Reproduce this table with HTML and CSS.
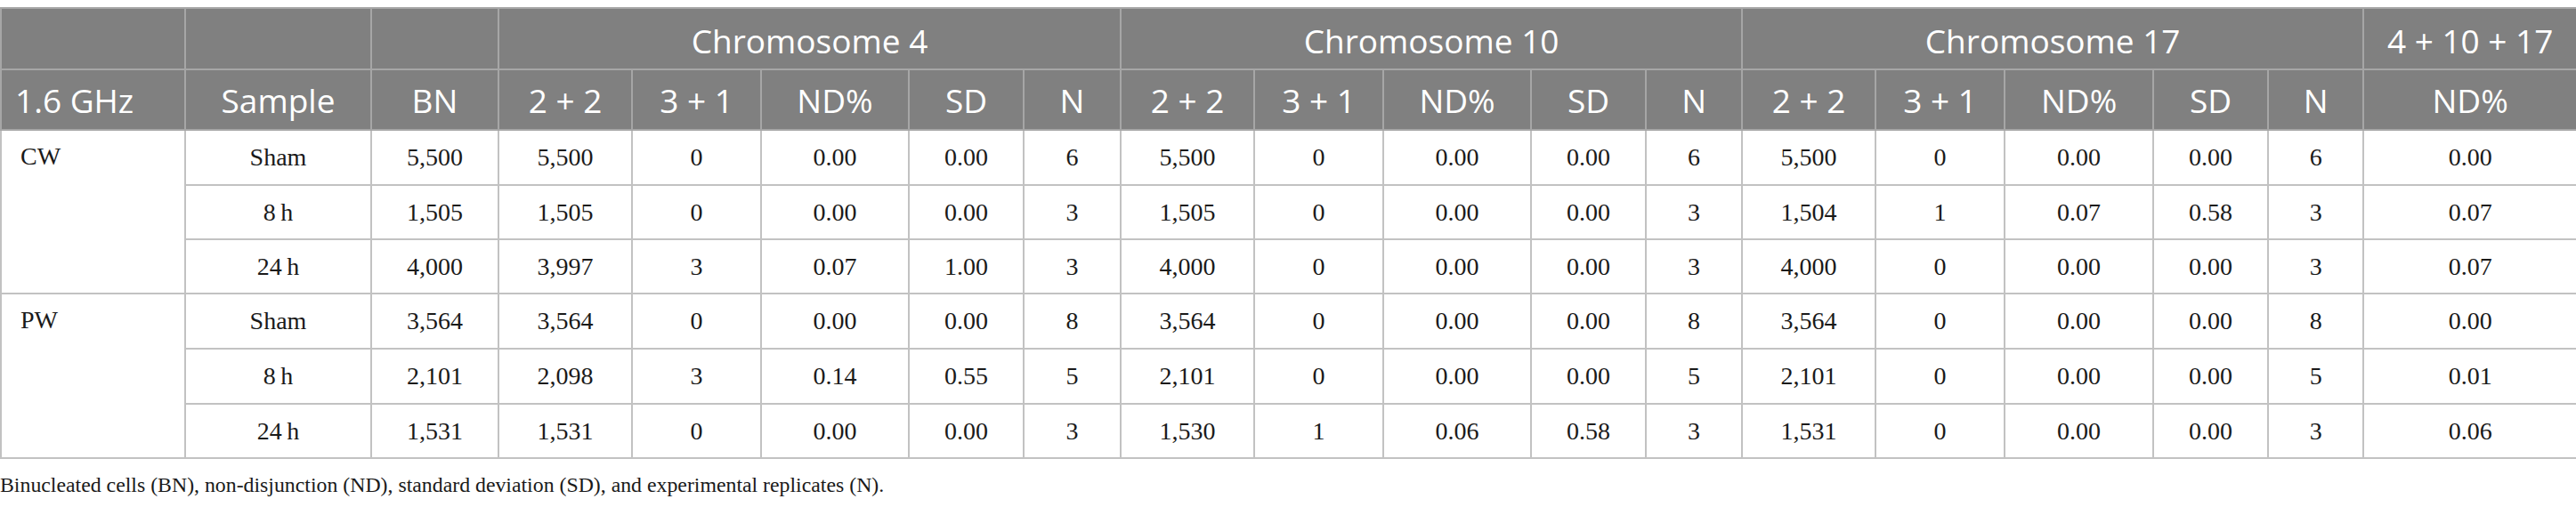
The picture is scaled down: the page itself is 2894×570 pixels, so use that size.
FILE: index.html
```html
<!DOCTYPE html>
<html lang="en">
<head>
<meta charset="utf-8">
<title>Table</title>
<link rel="stylesheet" href="styles.css">
</head>
<body>
<div class="wrap">
<table class="data">
<colgroup>
<col class="w207"><col class="w209"><col class="w143">
<col class="w150"><col class="w145"><col class="w166"><col class="w129"><col class="w109">
<col class="w150"><col class="w145"><col class="w166"><col class="w129"><col class="w108">
<col class="w150"><col class="w145"><col class="w167"><col class="w129"><col class="w107">
<col class="w240">
</colgroup>
<thead>
<tr class="h1">
<th></th><th></th><th></th>
<th colspan="5">Chromosome 4</th>
<th colspan="5">Chromosome 10</th>
<th colspan="5">Chromosome 17</th>
<th>4 + 10 + 17</th>
</tr>
<tr class="h2">
<th class="left">1.6 GHz</th><th>Sample</th><th>BN</th>
<th>2 + 2</th><th>3 + 1</th><th>ND%</th><th>SD</th><th>N</th>
<th>2 + 2</th><th>3 + 1</th><th>ND%</th><th>SD</th><th>N</th>
<th>2 + 2</th><th>3 + 1</th><th>ND%</th><th>SD</th><th>N</th>
<th>ND%</th>
</tr>
</thead>
<tbody>
<tr class="r62">
<td class="grp" rowspan="3">CW</td><td>Sham</td><td>5,500</td>
<td>5,500</td><td>0</td><td>0.00</td><td>0.00</td><td>6</td>
<td>5,500</td><td>0</td><td>0.00</td><td>0.00</td><td>6</td>
<td>5,500</td><td>0</td><td>0.00</td><td>0.00</td><td>6</td>
<td>0.00</td>
</tr>
<tr class="r61">
<td>8&#8201;h</td><td>1,505</td>
<td>1,505</td><td>0</td><td>0.00</td><td>0.00</td><td>3</td>
<td>1,505</td><td>0</td><td>0.00</td><td>0.00</td><td>3</td>
<td>1,504</td><td>1</td><td>0.07</td><td>0.58</td><td>3</td>
<td>0.07</td>
</tr>
<tr class="r61">
<td>24&#8201;h</td><td>4,000</td>
<td>3,997</td><td>3</td><td>0.07</td><td>1.00</td><td>3</td>
<td>4,000</td><td>0</td><td>0.00</td><td>0.00</td><td>3</td>
<td>4,000</td><td>0</td><td>0.00</td><td>0.00</td><td>3</td>
<td>0.07</td>
</tr>
<tr class="r62">
<td class="grp" rowspan="3">PW</td><td>Sham</td><td>3,564</td>
<td>3,564</td><td>0</td><td>0.00</td><td>0.00</td><td>8</td>
<td>3,564</td><td>0</td><td>0.00</td><td>0.00</td><td>8</td>
<td>3,564</td><td>0</td><td>0.00</td><td>0.00</td><td>8</td>
<td>0.00</td>
</tr>
<tr class="r62">
<td>8&#8201;h</td><td>2,101</td>
<td>2,098</td><td>3</td><td>0.14</td><td>0.55</td><td>5</td>
<td>2,101</td><td>0</td><td>0.00</td><td>0.00</td><td>5</td>
<td>2,101</td><td>0</td><td>0.00</td><td>0.00</td><td>5</td>
<td>0.01</td>
</tr>
<tr class="r61">
<td>24&#8201;h</td><td>1,531</td>
<td>1,531</td><td>0</td><td>0.00</td><td>0.00</td><td>3</td>
<td>1,530</td><td>1</td><td>0.06</td><td>0.58</td><td>3</td>
<td>1,531</td><td>0</td><td>0.00</td><td>0.00</td><td>3</td>
<td>0.06</td>
</tr>
</tbody>
</table>
<p class="caption">Binucleated cells (BN), non-disjunction (ND), standard deviation (SD), and experimental replicates (N).</p>
</div>
</body>
</html>
```

FILE: styles.css
```css
html, body {
  margin: 0;
  padding: 0;
  background: #ffffff;
}

.wrap {
  padding-top: 8px;
  width: 2894px;
}

.data {
  width: 2894px;
  table-layout: fixed;
  border-collapse: collapse;
  font-family: "Liberation Serif", "Times New Roman", serif;
  font-size: 28px;
  color: #1a1a1a;
}

.w207 { width: 207px; }
.w209 { width: 209px; }
.w143 { width: 143px; }
.w150 { width: 150px; }
.w145 { width: 145px; }
.w166 { width: 166px; }
.w167 { width: 167px; }
.w129 { width: 129px; }
.w109 { width: 109px; }
.w108 { width: 108px; }
.w107 { width: 107px; }
.w240 { width: 240px; }

.data th {
  background: #808080;
  color: #ffffff;
  font-family: "Open Sans", "Noto Sans", sans-serif;
  font-weight: 400;
  font-size: 37px;
  border: 2px solid #a6a6a6;
  padding: 0 8px;
  text-align: center;
  vertical-align: middle;
  white-space: nowrap;
  overflow: hidden;
}

.data th.left {
  text-align: left;
  padding-left: 15px;
}

.data tr.h1 { height: 69px; }
.data tr.h1 th { padding-top: 4px; }
.data tr.h2 { height: 68px; }

.data td {
  border: 2px solid #c2c2c2;
  padding: 0 6px;
  text-align: center;
  vertical-align: middle;
  white-space: nowrap;
}

.data td.grp {
  text-align: left;
  vertical-align: top;
  padding-left: 21px;
  padding-top: 13px;
}

.data tr.r62 { height: 62px; }
.data tr.r61 { height: 61px; }

.caption {
  margin: 16px 0 0 0;
  font-family: "Liberation Serif", "Times New Roman", serif;
  font-size: 23.8px;
  color: #1a1a1a;
}
```
